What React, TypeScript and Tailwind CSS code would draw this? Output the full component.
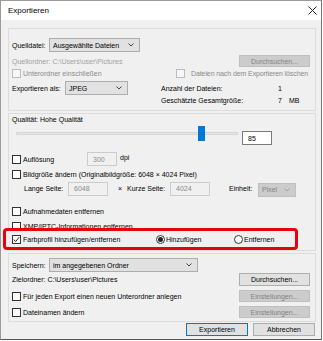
import React from "react";

type Box = { checked?: boolean; disabled?: boolean };

function Check({ checked, disabled }: Box) {
  return (
    <span
      className={`flex w-[9px] h-[9px] shrink-0 items-center justify-center border ${
        disabled ? "border-[#bcbcbc] bg-[#f7f7f7]" : "border-[#333333] bg-white"
      }`}
    >
      {checked && (
        <svg width="7" height="7" viewBox="0 0 7 7">
          <path d="M0.8 3.6 L2.7 5.5 L6.2 1.2" fill="none" stroke="#222" strokeWidth="1" />
        </svg>
      )}
    </span>
  );
}

function Radio({ checked }: { checked?: boolean }) {
  return (
    <span className="flex w-[9px] h-[9px] shrink-0 items-center justify-center rounded-full border border-[#333333] bg-white">
      {checked && <span className="w-[5px] h-[5px] rounded-full bg-[#222]" />}
    </span>
  );
}

function Chevron({ color = "#333" }: { color?: string }) {
  return (
    <svg width="6" height="4" viewBox="0 0 6 4" className="shrink-0">
      <path d="M0.5 0.5 L3 3 L5.5 0.5" fill="none" stroke={color} strokeWidth="0.9" />
    </svg>
  );
}

function Select({ label, width, disabled }: { label: string; width: string; disabled?: boolean }) {
  return (
    <div
      className={`${width} h-[14px] shrink-0 flex items-center justify-between pl-[3px] pr-[5px] border ${
        disabled ? "border-[#bfbfbf] bg-[#cccccc] text-[#838383]" : "border-[#adadad] bg-[#e1e1e1]"
      }`}
    >
      <span>{label}</span>
      <Chevron color={disabled ? "#9a9a9a" : "#333"} />
    </div>
  );
}

function Btn({ label, disabled, primary, cls = "w-[71px] h-[13px]" }: { label: string; disabled?: boolean; primary?: boolean; cls?: string }) {
  return (
    <div
      className={`${cls} shrink-0 flex items-center justify-center border ${
        disabled
          ? "border-[#bfbfbf] bg-[#cccccc] text-[#838383]"
          : primary
          ? "border-[#0078d7] bg-[#e1e1e1]"
          : "border-[#adadad] bg-[#e1e1e1]"
      }`}
    >
      {label}
    </div>
  );
}

function Field({ value, width, active }: { value: string; width: string; active?: boolean }) {
  return (
    <div
      className={`${width} h-[14px] shrink-0 flex items-center pl-[5px] border ${
        active ? "border-[#7a7a7a] bg-white text-black" : "border-[#cccccc] bg-[#f0f0f0] text-[#8a8a8a]"
      }`}
    >
      {value}
    </div>
  );
}

export default function App() {
  return (
    <div className="w-[323px] h-[341px] bg-white font-['Liberation_Sans',Arial,sans-serif] text-[7px] leading-none text-black whitespace-nowrap">
      <div className="w-[322px] h-[340px] flex flex-col border border-[#9a9a9a] border-b-[#555] border-r-[#777] bg-[#f0f0f0]">
        {/* title bar */}
        <div className="h-[19px] shrink-0 flex items-center justify-between bg-white pl-[7px] pr-[4px]">
          <span className="text-[8px]">Exportieren</span>
          <svg width="9" height="9" viewBox="0 0 9 9">
            <path d="M0.5 0.5 L8.5 8.5 M8.5 0.5 L0.5 8.5" stroke="#222" strokeWidth="1" />
          </svg>
        </div>

        <div className="flex flex-col pl-[7px] pr-[5px] pt-[8px]">
          {/* Quelle */}
          <div className="h-[83px] flex flex-col border border-[#dcdcdc] pl-[3px] pr-[5px]">
            <div className="mt-[8px] h-[16px] flex items-center">
              <span className="w-[37px]">Quelldatei:</span>
              <Select label="Ausgewählte Dateien" width="w-[91px]" />
            </div>
            <div className="mt-[1px] h-[14px] flex items-center justify-between">
              <span className="text-[#a0a0a0]">Quellordner: C:\Users\user\Pictures</span>
              <Btn label="Durchsuchen..." disabled cls="w-[71px] h-[12px]" />
            </div>
            <div className="h-[11px] flex items-center">
              <div className="w-[164px] shrink-0 flex items-center gap-[2px] text-[#8a8a8a]">
                <Check disabled />
                <span>Unterordner einschließen</span>
              </div>
              <div className="flex items-center gap-[6px] text-[#8a8a8a] tracking-[-0.1px]">
                <Check disabled />
                <span>Dateien nach dem Exportieren löschen</span>
              </div>
            </div>
            <div className="mt-[2px] flex">
              <div className="w-[149px] shrink-0 h-[14px] flex items-center">
                <span className="w-[53px]">Exportieren als:</span>
                <Select label="JPEG" width="w-[63px]" />
              </div>
              <div className="pt-[1px] flex flex-col">
                <div className="h-[12px] flex items-center">
                  <span className="w-[117px]">Anzahl der Dateien:</span>
                  <span>1</span>
                </div>
                <div className="h-[12px] flex items-center">
                  <span className="w-[117px]">Geschätzte Gesamtgröße:</span>
                  <span className="w-[11px]">7</span>
                  <span>MB</span>
                </div>
              </div>
            </div>
          </div>

          {/* Bild */}
          <div className="mt-[2px] h-[138px] flex flex-col border border-[#dcdcdc] pl-[3px]">
            <div className="h-[11px] flex items-center">Qualität: Hohe Qualität</div>
            <div className="mt-[2px] h-[19px] flex">
              <div className="relative ml-[4px] w-[222px] h-[15px]">
                <div className="absolute left-0 right-0 top-[6px] h-[3px] border border-[#d6d6d6] bg-[#e7e7e7]" />
                <div className="absolute left-[182px] top-0 w-[7px] h-[15px] bg-[#0078d7]" />
              </div>
              <div className="ml-[4px] mt-[5px]">
                <Field value="85" width="w-[30px]" active />
              </div>
            </div>
            <div className="mt-[7px] h-[14px] flex items-center">
              <div className="w-[75px] flex items-center gap-[2px]">
                <Check />
                <span>Auflösung</span>
              </div>
              <Field value="300" width="w-[30px]" />
              <span className="ml-[3px] mb-[4px]">dpi</span>
            </div>
            <div className="mt-[3px] h-[10px] flex items-center gap-[2px]">
              <Check />
              <span>Bildgröße ändern (Originalbildgröße: 6048 × 4024 Pixel)</span>
            </div>
            <div className="mt-[3px] h-[14px] flex items-center">
              <span className="ml-[12px] w-[44px]">Lange Seite:</span>
              <Field value="6048" width="w-[40px]" />
              <span className="ml-[10px] w-[9px]">×</span>
              <span className="w-[43px]">Kurze Seite:</span>
              <Field value="4024" width="w-[40px]" />
              <span className="ml-[19px] w-[29px]">Einheit:</span>
              <div className="mt-[2px]">
                <Select label="Pixel" width="w-[38px]" disabled />
              </div>
            </div>
            <div className="mt-[11px] h-[10px] flex items-center gap-[2px]">
              <Check />
              <span>Aufnahmedaten entfernen</span>
            </div>
            <div className="mt-[5px] h-[10px] flex items-center gap-[2px]">
              <Check />
              <span>XMP/IPTC-Informationen entfernen</span>
            </div>
            <div className="relative z-10 -mt-[3px] -ml-[9px] w-[295px] h-[22px] shrink-0 flex items-center rounded-[4px] border-[3px] border-[#e8000b] bg-[#f0f0f0] pl-[6px]">
              <div className="w-[144px] flex items-center gap-[2px]">
                <Check checked />
                <span>Farbprofil hinzufügen/entfernen</span>
              </div>
              <div className="w-[78px] flex items-center gap-[1px]">
                <Radio checked />
                <span>Hinzufügen</span>
              </div>
              <div className="flex items-center gap-[1px]">
                <Radio />
                <span>Entfernen</span>
              </div>
            </div>
          </div>

          {/* Ziel */}
          <div className="mt-[2px] h-[69px] flex flex-col border border-[#dcdcdc] pl-[3px] pr-[5px]">
            <div className="mt-[4px] h-[14px] flex items-center">
              <span className="w-[37px]">Speichern:</span>
              <Select label="im angegebenen Ordner" width="w-[149px]" />
            </div>
            <div className="mt-[1px] h-[13px] flex items-center justify-between">
              <span>Zielordner: C:\Users\user\Pictures</span>
              <Btn label="Durchsuchen..." />
            </div>
            <div className="mt-[4px] h-[12px] flex items-center justify-between">
              <div className="flex items-center gap-[2px]">
                <Check />
                <span>Für jeden Export einen neuen Unterordner anlegen</span>
              </div>
              <Btn label="Einstellungen..." disabled cls="w-[71px] h-[12px]" />
            </div>
            <div className="mt-[4px] h-[12px] flex items-center justify-between">
              <div className="flex items-center gap-[2px]">
                <Check />
                <span>Dateinamen ändern</span>
              </div>
              <Btn label="Einstellungen..." disabled cls="w-[71px] h-[12px]" />
            </div>
          </div>

          <div className="mt-[1px] h-[13px] flex justify-end gap-[5px] pr-[1px]">
            <Btn label="Exportieren" primary cls="w-[62px] h-[13px]" />
            <Btn label="Abbrechen" cls="w-[62px] h-[13px]" />
          </div>
        </div>
      </div>
    </div>
  );
}
